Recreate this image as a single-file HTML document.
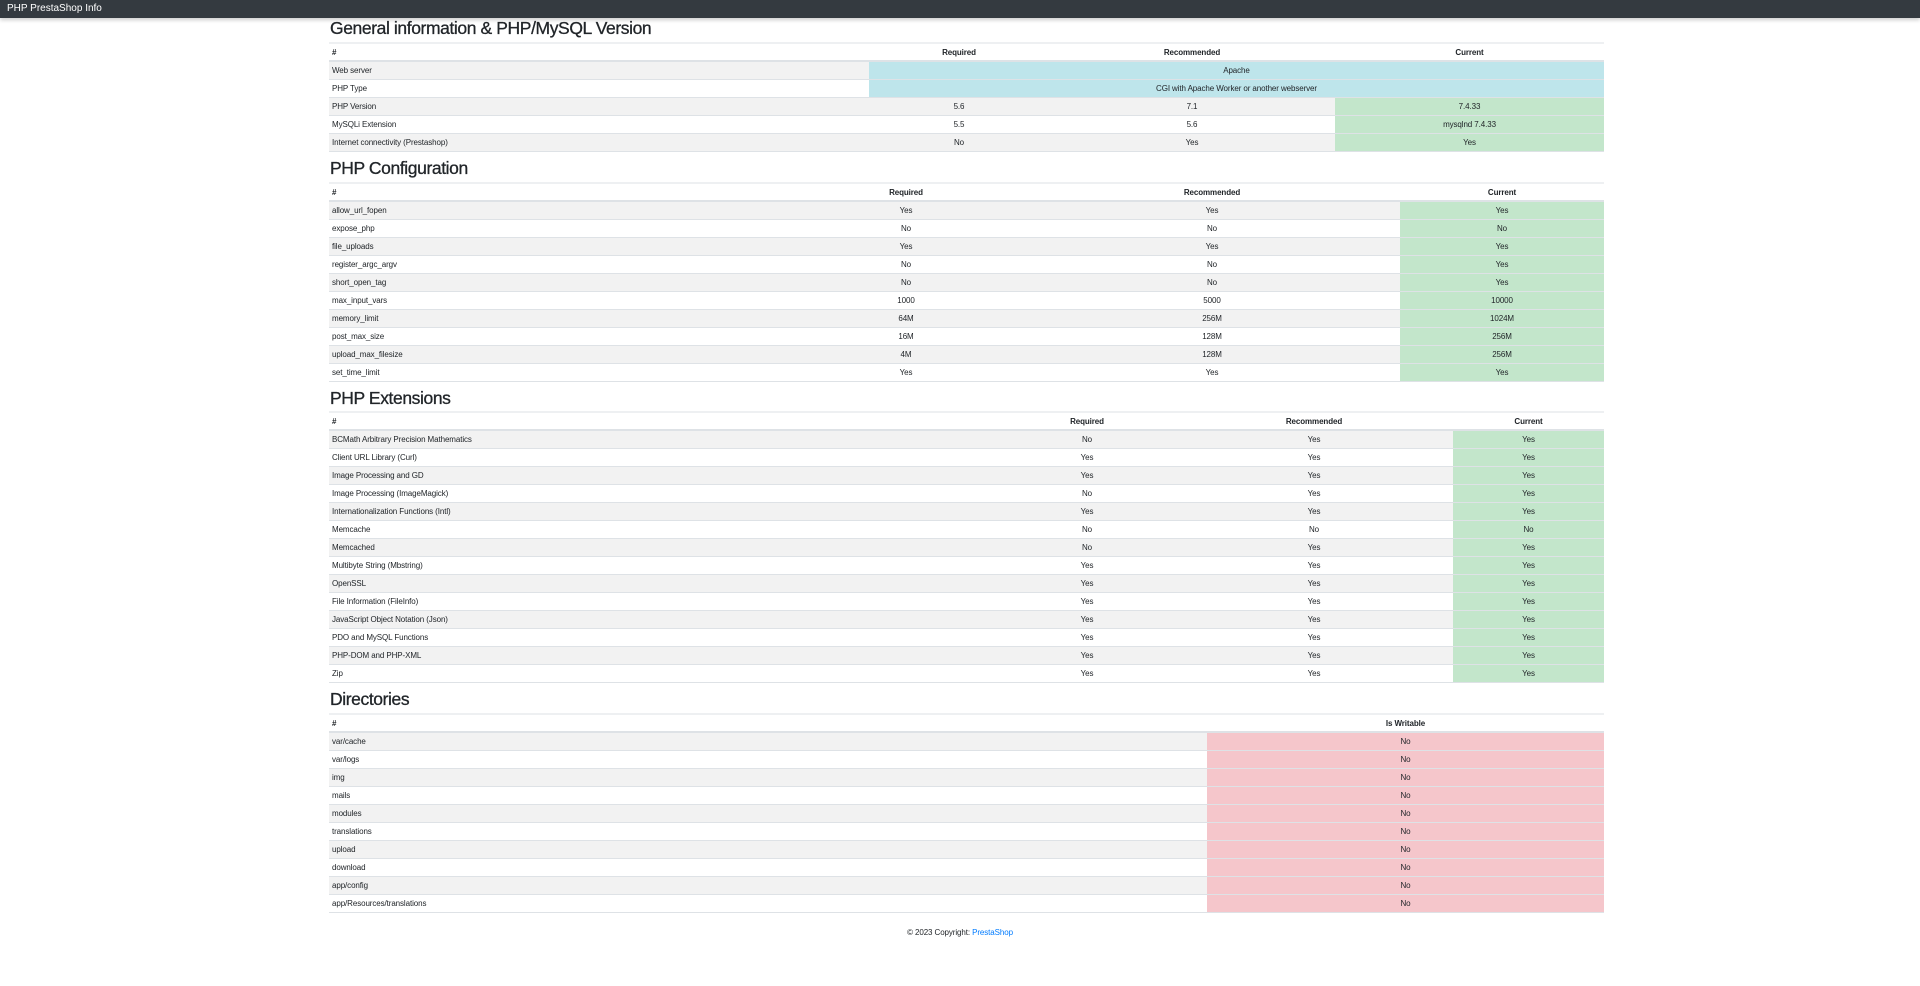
<!DOCTYPE html>
<html><head><meta charset="utf-8"><style>
*{box-sizing:border-box;margin:0;padding:0}
body{width:1920px;height:986px;background:#fff;font-family:"Liberation Sans",sans-serif;color:#212529;position:relative;overflow:hidden}
.nav{position:absolute;left:0;top:0;width:1920px;height:18px;background:#343a40;color:#fff;font-size:10px;line-height:18px;padding-left:7px;box-shadow:0 2px 4px rgba(0,0,0,.2)}
h2{position:absolute;left:330px;font-size:17.5px;font-weight:normal;line-height:22px;color:#212529;letter-spacing:-0.4px;-webkit-text-stroke:0.3px #212529}
table{position:absolute;left:329px;width:1275px;border-collapse:collapse;font-size:8px;table-layout:fixed;border-top:2px solid #eef0f2;letter-spacing:-0.1px}
td,th{height:18px;padding:0 3px;border-bottom:1px solid #dee2e6;text-align:center;vertical-align:middle;white-space:nowrap}
th{font-weight:bold;border-bottom:2px solid #dee2e6}
td:first-child,th:first-child{text-align:left}
tbody tr:nth-child(odd){background:#f2f2f2}
.i{background:#bee5eb}.s{background:#c3e6cb}.d{background:#f5c6cb}
.foot{position:absolute;top:928px;left:0;width:1920px;text-align:center;font-size:8px;letter-spacing:-0.1px}
.foot a{color:#007bff;text-decoration:none}
</style></head><body>
<div class="nav">PHP PrestaShop Info</div>

<h2 style="top:17px">General information &amp; PHP/MySQL Version</h2>
<table style="top:42px">
<colgroup><col style="width:540px"><col style="width:180px"><col style="width:286px"><col></colgroup>
<thead><tr><th>#</th><th>Required</th><th>Recommended</th><th>Current</th></tr></thead>
<tbody>
<tr><td>Web server</td><td class="i" colspan="3">Apache</td></tr>
<tr><td>PHP Type</td><td class="i" colspan="3">CGI with Apache Worker or another webserver</td></tr>
<tr><td>PHP Version</td><td>5.6</td><td>7.1</td><td class="s">7.4.33</td></tr>
<tr><td>MySQLi Extension</td><td>5.5</td><td>5.6</td><td class="s">mysqlnd 7.4.33</td></tr>
<tr><td>Internet connectivity (Prestashop)</td><td>No</td><td>Yes</td><td class="s">Yes</td></tr>
</tbody></table>

<h2 style="top:157px">PHP Configuration</h2>
<table style="top:182px">
<colgroup><col style="width:459px"><col style="width:236px"><col style="width:376px"><col></colgroup>
<thead><tr><th>#</th><th>Required</th><th>Recommended</th><th>Current</th></tr></thead>
<tbody>
<tr><td>allow_url_fopen</td><td>Yes</td><td>Yes</td><td class="s">Yes</td></tr>
<tr><td>expose_php</td><td>No</td><td>No</td><td class="s">No</td></tr>
<tr><td>file_uploads</td><td>Yes</td><td>Yes</td><td class="s">Yes</td></tr>
<tr><td>register_argc_argv</td><td>No</td><td>No</td><td class="s">Yes</td></tr>
<tr><td>short_open_tag</td><td>No</td><td>No</td><td class="s">Yes</td></tr>
<tr><td>max_input_vars</td><td>1000</td><td>5000</td><td class="s">10000</td></tr>
<tr><td>memory_limit</td><td>64M</td><td>256M</td><td class="s">1024M</td></tr>
<tr><td>post_max_size</td><td>16M</td><td>128M</td><td class="s">256M</td></tr>
<tr><td>upload_max_filesize</td><td>4M</td><td>128M</td><td class="s">256M</td></tr>
<tr><td>set_time_limit</td><td>Yes</td><td>Yes</td><td class="s">Yes</td></tr>
</tbody></table>

<h2 style="top:387px">PHP Extensions</h2>
<table style="top:411px">
<colgroup><col style="width:670px"><col style="width:176px"><col style="width:278px"><col></colgroup>
<thead><tr><th>#</th><th>Required</th><th>Recommended</th><th>Current</th></tr></thead>
<tbody>
<tr><td>BCMath Arbitrary Precision Mathematics</td><td>No</td><td>Yes</td><td class="s">Yes</td></tr>
<tr><td>Client URL Library (Curl)</td><td>Yes</td><td>Yes</td><td class="s">Yes</td></tr>
<tr><td>Image Processing and GD</td><td>Yes</td><td>Yes</td><td class="s">Yes</td></tr>
<tr><td>Image Processing (ImageMagick)</td><td>No</td><td>Yes</td><td class="s">Yes</td></tr>
<tr><td>Internationalization Functions (Intl)</td><td>Yes</td><td>Yes</td><td class="s">Yes</td></tr>
<tr><td>Memcache</td><td>No</td><td>No</td><td class="s">No</td></tr>
<tr><td>Memcached</td><td>No</td><td>Yes</td><td class="s">Yes</td></tr>
<tr><td>Multibyte String (Mbstring)</td><td>Yes</td><td>Yes</td><td class="s">Yes</td></tr>
<tr><td>OpenSSL</td><td>Yes</td><td>Yes</td><td class="s">Yes</td></tr>
<tr><td>File Information (FileInfo)</td><td>Yes</td><td>Yes</td><td class="s">Yes</td></tr>
<tr><td>JavaScript Object Notation (Json)</td><td>Yes</td><td>Yes</td><td class="s">Yes</td></tr>
<tr><td>PDO and MySQL Functions</td><td>Yes</td><td>Yes</td><td class="s">Yes</td></tr>
<tr><td>PHP-DOM and PHP-XML</td><td>Yes</td><td>Yes</td><td class="s">Yes</td></tr>
<tr><td>Zip</td><td>Yes</td><td>Yes</td><td class="s">Yes</td></tr>
</tbody></table>

<h2 style="top:688px">Directories</h2>
<table style="top:713px">
<colgroup><col style="width:878px"><col></colgroup>
<thead><tr><th>#</th><th>Is Writable</th></tr></thead>
<tbody>
<tr><td>var/cache</td><td class="d">No</td></tr>
<tr><td>var/logs</td><td class="d">No</td></tr>
<tr><td>img</td><td class="d">No</td></tr>
<tr><td>mails</td><td class="d">No</td></tr>
<tr><td>modules</td><td class="d">No</td></tr>
<tr><td>translations</td><td class="d">No</td></tr>
<tr><td>upload</td><td class="d">No</td></tr>
<tr><td>download</td><td class="d">No</td></tr>
<tr><td>app/config</td><td class="d">No</td></tr>
<tr><td>app/Resources/translations</td><td class="d">No</td></tr>
</tbody></table>

<div class="foot">© 2023 Copyright: <a>PrestaShop</a></div>
</body></html>
